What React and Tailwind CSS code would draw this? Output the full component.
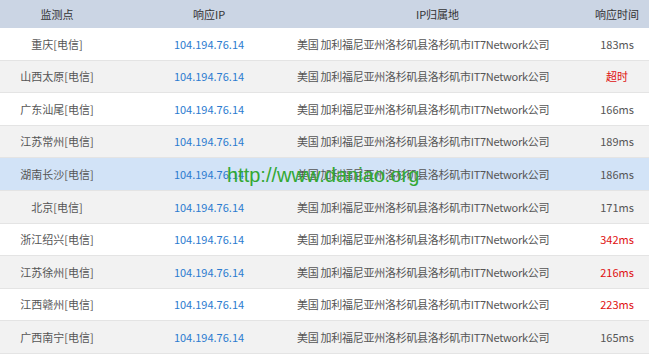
const rows = [
  { point: "重庆[电信]", time: "183ms" },
  { point: "山西太原[电信]", time: "超时", red: true },
  { point: "广东汕尾[电信]", time: "166ms" },
  { point: "江苏常州[电信]", time: "189ms" },
  { point: "湖南长沙[电信]", time: "186ms", hover: true },
  { point: "北京[电信]", time: "171ms" },
  { point: "浙江绍兴[电信]", time: "342ms", red: true },
  { point: "江苏徐州[电信]", time: "216ms", red: true },
  { point: "江西赣州[电信]", time: "223ms", red: true },
  { point: "广西南宁[电信]", time: "165ms" },
];

const cols = "grid grid-cols-[114px_176px_295px_64px] items-center";

export default function App() {
  return (
    <div
      className="relative w-[649px] h-[354px] overflow-hidden bg-white text-[11px] text-[#555]"
      style={{ fontFamily: '"Noto Sans CJK SC", "Noto Sans", sans-serif' }}
    >
      <div className={`${cols} h-[28px] bg-[#cbd5e4] text-[#333]`}>
        <div className="text-center">监测点</div>
        <div className="text-center pl-[14px]">响应IP</div>
        <div className="text-center">IP归属地</div>
        <div className="text-center">响应时间</div>
      </div>

      {rows.map((r, i) => (
        <div
          key={i}
          className={`${cols} h-[32.6px] border-b border-[#e4e4e4] ${
            r.hover ? "bg-[#d2e3f7]" : i % 2 === 1 ? "bg-[#f2f2f2]" : "bg-white"
          }`}
        >
          <div className="text-center">{r.point}</div>
          <div className="text-center pl-[14px] text-[#2b7bd0]">104.194.76.14</div>
          <div className="pl-[7px] whitespace-nowrap tracking-[-0.28px]">
            美国 加利福尼亚州洛杉矶县洛杉矶市IT7Network公司
          </div>
          <div className={`text-center ${r.red ? "text-[#e01010]" : ""}`}>{r.time}</div>
        </div>
      ))}

      <div
        className="absolute left-[227px] top-[165px] text-[20px] leading-none text-[#33a833]"
        style={{ fontFamily: '"Liberation Sans", Arial, sans-serif' }}
      >
        http://www.daniao.org
      </div>
    </div>
  );
}
